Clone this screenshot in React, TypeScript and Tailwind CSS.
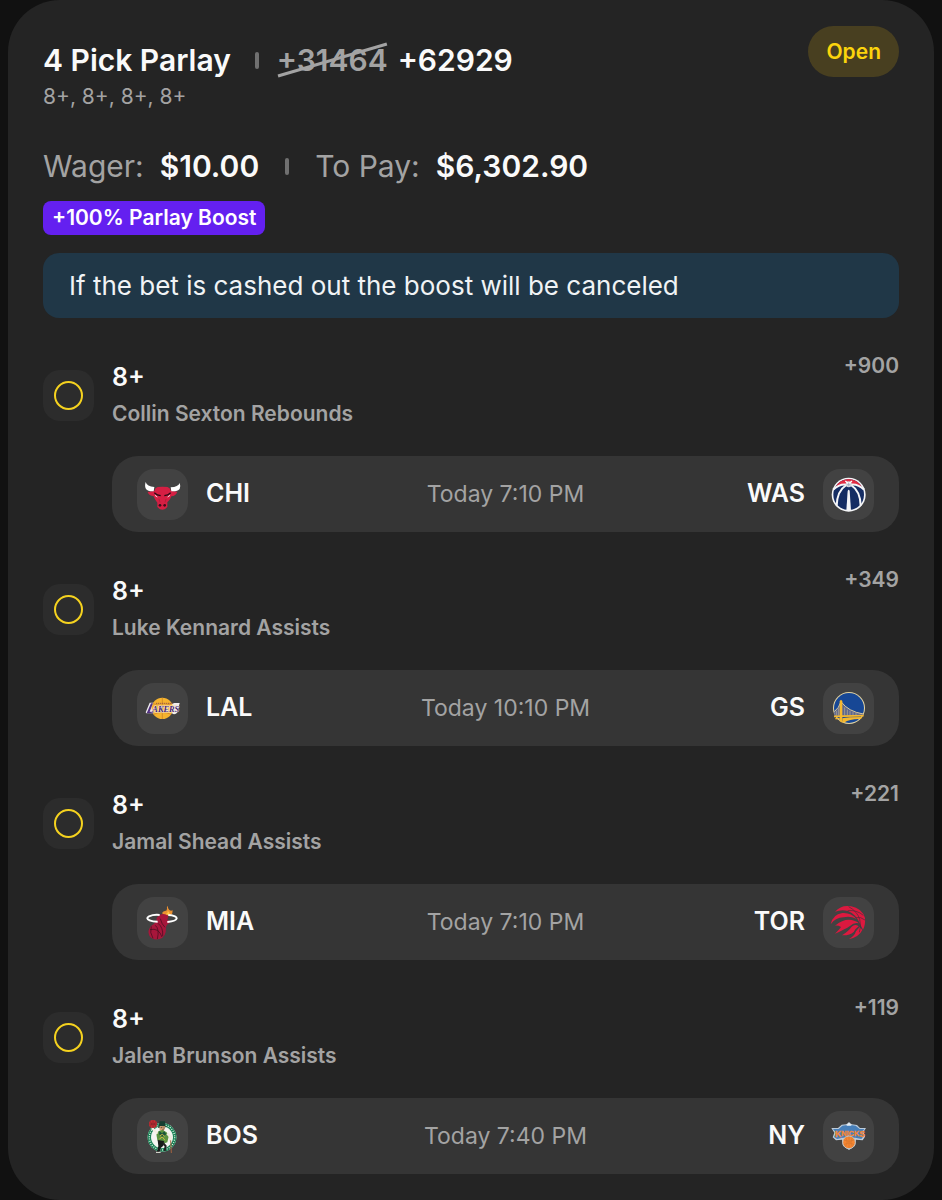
import React from 'react';

type TeamCode = 'CHI' | 'WAS' | 'LAL' | 'GS' | 'MIA' | 'TOR' | 'BOS' | 'NY';

interface Leg {
    pick: string;
    market: string;
    odds: string;
    away: TeamCode;
    home: TeamCode;
    time: string;
}

const legs: Leg[] = [
    { pick: '8+', market: 'Collin Sexton Rebounds', odds: '+900', away: 'CHI', home: 'WAS', time: 'Today 7:10 PM' },
    { pick: '8+', market: 'Luke Kennard Assists', odds: '+349', away: 'LAL', home: 'GS', time: 'Today 10:10 PM' },
    { pick: '8+', market: 'Jamal Shead Assists', odds: '+221', away: 'MIA', home: 'TOR', time: 'Today 7:10 PM' },
    { pick: '8+', market: 'Jalen Brunson Assists', odds: '+119', away: 'BOS', home: 'NY', time: 'Today 7:40 PM' },
];

/* Team marks, all drawn on a 153 unit tile */
const logos: Record<TeamCode, React.ReactNode> = {
    CHI: (
        <>
            <path d="M32 69 L52 66 Q54 56 62 54 Q76 52 92 54 Q100 57 102 66 L121 68 Q117 80 103 82 L99 91 L91 100 L91 114 Q85 122 76 122 Q67 122 61 114 L61 101 L54 91 L50 82 Q36 80 32 69Z" fill="#d51f43" />
            <path d="M26 39 Q30 53 52 54 L50 67 Q33 68 27 60 Q22 52 26 39Z" fill="#fff" />
            <path d="M128 42 Q124 54 101 55 L103 67 Q122 68 128 60 Q132 53 128 42Z" fill="#fff" />
            <path d="M52 71 L61 78 L71 80 M101 71 L92 78 L82 80" stroke="#250d14" strokeWidth="4" fill="none" />
            <path d="M54 79 L61 84 M99 79 L92 84" stroke="#f4dfe3" strokeWidth="3" />
            <path d="M66 90 L69 100 M87 90 L84 100" stroke="#a81a38" strokeWidth="2" />
            <circle cx="69" cy="109" r="4" fill="#3a0d18" />
            <circle cx="83" cy="109" r="4" fill="#3a0d18" />
        </>
    ),
    WAS: (
        <>
            <circle cx="77" cy="77" r="51" fill="#f5f6f8" />
            <circle cx="77" cy="77" r="46" fill="#152d63" />
            <path d="M36 56 Q50 31 77 30 Q104 31 118 56 Q98 44 77 46 Q56 44 36 56Z" fill="#e12c43" />
            <path d="M31 62 Q52 41 77 48 Q102 41 123 62" stroke="#f5f6f8" strokeWidth="6" fill="none" />
            <path d="M70 48 Q42 66 41 110 M84 48 Q112 66 113 110" stroke="#f5f6f8" strokeWidth="6" fill="none" />
            <path d="M74 66 Q77 59 80 66 L84 125 H70Z" fill="#f5f6f8" />
            <circle cx="77" cy="46" r="9" fill="#d8dbe2" />
            <path d="M67 36 L75 43 M87 36 L79 43" stroke="#fff" strokeWidth="4" />
            <path d="M72 47 H82 M77 42 V52" stroke="#9ba5b8" strokeWidth="2" />
        </>
    ),
    LAL: (
        <>
            <path d="M38 59 H52 L49 84 L112 60 H128 L122 84 Q119 94 111 94 L104 91 L28 91 L26 88Z" fill="#efecef" />
            <circle cx="76" cy="76" r="32" fill="#f5b32e" />
            <path d="M48 62 Q76 72 104 62 M50 94 Q76 82 102 94 M76 44 V108" stroke="#c57b25" strokeWidth="2" fill="none" />
            <path d="M53 65 H126 L118 89 L45 91Z" fill="#f4d492" fillOpacity=".35" />
            <path d="M42 61 H48 L38 86 H50 L48 91 H29Z" fill="#513081" />
            <text x="46" y="87" fontFamily="Liberation Serif, serif" fontSize="25" fontWeight="700" fontStyle="italic" fill="#49256f" stroke="#fff" strokeWidth="2" paintOrder="stroke">AKERS</text>
            <path d="M57 61 H107" stroke="#9a5841" strokeWidth="3" strokeDasharray="4 2" />
        </>
    ),
    GS: (
        <>
            <circle cx="78" cy="75" r="48" fill="#e2d4a4" />
            <circle cx="78" cy="75" r="45" fill="#174795" />
            <path d="M34 88 Q49 74 53 56 Q77 86 121 93 L119 98 L34 98Z" fill="#5b6590" />
            <path d="M34 86 Q48 75 54 56 Q76 86 121 93" stroke="#dccb9d" strokeWidth="3" fill="none" />
            <path d="M40 83 V98 M46 76 V98 M65 73 V98 M73 80 V98 M81 84 V98 M90 87 V98 M99 90 V98" stroke="#c2b690" strokeWidth="2" />
            <path d="M33 100 L122 98" stroke="#f5b82e" strokeWidth="5" />
            <path d="M50 54 L54 50 L58 54 V119 L50 115Z" fill="#f5b82e" />
            <path d="M58 106 Q74 102 118 102 L114 108 Q80 107 63 119 L58 118Z" fill="#f5b82e" />
            <path d="M37 107 H50" stroke="#f5b82e" strokeWidth="4" />
        </>
    ),
    MIA: (
        <>
            <path d="M77 52 Q73 44 84 42 Q90 42 90 35 Q88 30 93 26 Q91 35 97 39 Q104 44 106 38 Q109 50 99 57Z" fill="#eb9132" />
            <path d="M86 51 Q94 49 91 42 Q101 46 96 54Z" fill="#ffc744" />
            <path d="M69 53 Q82 48 94 57 L91 69 Q100 71 98 78 Q88 82 87 92 Q88 119 68 126 Q47 131 37 116 Q30 101 42 87 Q61 75 59 62Z" fill="#a7163b" />
            <path d="M55 85 Q68 96 61 126 M39 98 Q65 91 75 120 M43 88 Q37 107 48 124 M63 79 Q79 91 77 117 M70 65 Q74 82 84 91" stroke="#390d1c" strokeWidth="2" fill="none" />
            <path d="M68 54 Q50 52 36 58 Q25 64 38 70 Q47 74 62 74 M94 54 Q119 56 119 64 Q118 72 91 75" stroke="#fff" strokeWidth="6" fill="none" />
        </>
    ),
    TOR: (
        <g fill="#dc193f">
            <path d="M36 44 Q56 22 84 28 Q117 34 126 63 Q128 83 120 98 L113 85 Q101 52 75 42 Q56 36 36 44Z" />
            <path d="M23 82 Q29 52 58 48 Q84 46 101 66 Q80 55 62 61 Q36 62 23 82Z" />
            <path d="M36 86 Q63 64 86 69 Q103 73 107 79 Q93 76 82 86 Q66 97 36 110 Q50 97 54 90 Q46 85 36 86Z" />
            <path d="M57 115 Q78 101 86 89 Q96 80 107 88 Q98 94 92 105 Q80 116 57 115Z" />
            <path d="M110 90 L118 99 Q108 120 77 127 Q95 117 99 103Z" />
            <path d="M77 29 Q104 44 110 67 Q116 87 109 106 M74 41 Q101 38 121 55 M98 62 Q112 58 126 69" stroke="#443039" strokeWidth="2" fill="none" />
        </g>
    ),
    BOS: (
        <>
            <circle cx="75" cy="79" r="43" fill="#edf2ed" />
            <circle cx="75" cy="79" r="38" fill="none" stroke="#178154" strokeWidth="10" />
            <circle cx="75" cy="79" r="38" fill="none" stroke="#ecf4ed" strokeWidth="4" strokeDasharray="3 4" />
            <circle cx="75" cy="79" r="30" fill="#f5f5f2" />
            <path d="M65 46 L68 31 L84 31 L85 46 L91 48 L63 51Z" fill="#163e31" />
            <path d="M68 45 L85 46 L82 58 L74 62 L67 55Z" fill="#d6a175" />
            <path d="M71 50 H76 M79 51 H83 M75 57 H81" stroke="#242424" strokeWidth="2" />
            <path d="M65 60 L76 57 L88 63 L96 73 L91 94 L78 98 L61 88 L58 69Z" fill="#5b9440" />
            <path d="M67 60 L75 67 L82 61 L88 70 L76 78 L66 70Z" fill="#1b553c" />
            <path d="M61 68 L52 58 L45 51" stroke="#f4eee2" strokeWidth="7" fill="none" />
            <path d="M91 67 L101 78 L99 91" stroke="#efe9df" strokeWidth="8" fill="none" />
            <path d="M62 87 L81 90 L79 104 L71 111 L70 121 L59 126 L64 105Z" fill="#171c1a" />
            <path d="M78 96 L86 105 L83 120" stroke="#222" strokeWidth="6" fill="none" />
            <circle cx="48" cy="39" r="12" fill="#c82c32" />
            <path d="M37 39 H59 M48 28 V50 M40 31 Q48 39 40 47 M56 31 Q49 39 56 47" stroke="#76252b" strokeWidth="2" fill="none" />
            <path d="M101 88 L103 126" stroke="#a56340" strokeWidth="3" />
            <path d="M69 74 L76 70 L83 76 M67 84 L76 78 L84 88" stroke="#d1b946" strokeWidth="3" fill="none" />
            <path d="M57 124 H71" stroke="#f2f0e7" strokeWidth="3" />
        </>
    ),
    NY: (
        <>
            <path d="M25 51 H45 L56 41 L70 40 L78 34 L86 40 L102 42 L111 51 H129 L122 62 L126 77 L119 88 L99 86 L96 104 L78 117 L60 104 L57 86 L39 88 L29 79 L34 65Z" fill="#bccbda" />
            <path d="M30 54 H47 L58 44 L78 41 L98 44 L110 54 H124 L118 62 L122 76 L115 84 L97 80 L60 80 L42 84 L33 78 L39 65Z" fill="#477fb9" />
            {/* Letters stand tallest at both ends */}
            <text y="79" fontFamily="Liberation Sans, sans-serif" fontWeight="700" fill="#f58735" stroke="#f58735" strokeWidth="1">
                <tspan x="36" fontSize="26">K</tspan>
                <tspan fontSize="22" dy="-3">NICK</tspan>
                <tspan fontSize="26" dy="3">S</tspan>
            </text>
            <circle cx="78" cy="94" r="19" fill="#f58531" stroke="#bfc6c9" strokeWidth="3" />
            <path d="M62 87 Q78 95 94 87 M63 101 Q78 91 93 101 M78 77 V111 M68 80 Q77 94 67 107 M89 80 Q79 94 89 107" stroke="#d5762e" strokeWidth="2" fill="none" />
            <path d="M78 35 V44 M71 42 H85" stroke="#e9f0f5" strokeWidth="4" />
        </>
    ),
};

const TeamLogo = ({ team }: { team: TeamCode }) => (
    <span className="size-[51px] shrink-0 rounded-[17px] bg-[#424242]">
        <svg viewBox="0 0 153 153" className="size-full" aria-hidden="true">
            {logos[team]}
        </svg>
    </span>
);

const Divider = () => <span className="h-[17px] w-1 shrink-0 rounded-full bg-[#707070]" />;

const LegRow = ({ leg }: { leg: Leg }) => (
    <li className="flex gap-[18px]">
        <span className="mt-[18px] flex size-[51px] shrink-0 items-center justify-center rounded-[17px] bg-[#2c2c2c]">
            <span className="size-[29px] rounded-full border-2 border-[#f5d21f]" />
        </span>
        <div className="min-w-0 flex-1">
            <div className="flex justify-between">
                <div className="pt-2">
                    <h3 className="text-[25px] leading-[34px] font-semibold text-[#fafafa]">{leg.pick}</h3>
                    <p className="mt-1 text-[21px] leading-8 font-semibold text-[#a3a3a3]">{leg.market}</p>
                </div>
                <span className="text-[21px] leading-7 font-semibold text-[#a3a3a3]">{leg.odds}</span>
            </div>
            {/* Matchup */}
            <div className="mt-[26px] grid h-[76px] grid-cols-[1fr_auto_1fr] items-center rounded-[26px] bg-[#353535] px-[25px] text-[25px] font-semibold text-[#fafafa]">
                <div className="flex items-center gap-[18px]">
                    <TeamLogo team={leg.away} />
                    <span>{leg.away}</span>
                </div>
                <time className="text-[23px] font-normal text-[#a3a3a3]">{leg.time}</time>
                <div className="flex items-center justify-end gap-[18px]">
                    <span>{leg.home}</span>
                    <TeamLogo team={leg.home} />
                </div>
            </div>
        </div>
    </li>
);

export default function App() {
    return (
        <main className="min-h-screen bg-[#111111] px-2 font-['Inter',sans-serif]">
            <article className="rounded-[52px] bg-[#242424] px-[35px] pt-[26px] pb-[26px]">
                <header className="flex items-start justify-between">
                    <div className="pt-4">
                        <div className="flex items-center text-[30px] leading-9 font-semibold text-[#fafafa]">
                            <h2 className="mr-6">4 Pick Parlay</h2>
                            <Divider />
                            <span className="relative mr-[10px] ml-[18px] text-[#a3a3a3]">
                                +31464
                                <svg viewBox="0 0 110 36" preserveAspectRatio="none" className="absolute inset-0 size-full" aria-hidden="true">
                                    <path d="M1 34 L109 2" stroke="#a3a3a3" strokeWidth="3" />
                                </svg>
                            </span>
                            <span>+62929</span>
                        </div>
                        <p className="mt-[3px] text-[21px] leading-8 text-[#a3a3a3]">8+, 8+, 8+, 8+</p>
                    </div>
                    <span className="rounded-full bg-[#483f20] px-[18px] text-[21px] leading-[51px] font-semibold text-[#fcd40c]">Open</span>
                </header>

                <dl className="mt-8 flex items-center text-[30px] leading-[42px]">
                    <dt className="mr-4 font-normal text-[#a3a3a3]">Wager:</dt>
                    <dd className="mr-[26px] font-semibold text-[#fafafa]">$10.00</dd>
                    <Divider />
                    <dt className="mr-4 ml-[26px] font-normal text-[#a3a3a3]">To Pay:</dt>
                    <dd className="font-semibold text-[#fafafa]">$6,302.90</dd>
                </dl>

                <div className="mt-[14px] flex">
                    <span className="rounded-lg bg-[#6420f0] px-[9px] text-[21px] leading-[34px] font-semibold text-white">+100% Parlay Boost</span>
                </div>
                <p className="mt-[18px] rounded-2xl bg-[#203747] px-[26px] text-[26px] leading-[65px] text-[#f0f3f5]">
                    If the bet is cashed out the boost will be canceled
                </p>

                <ul className="mt-[34px] flex flex-col gap-[34px]">
                    {legs.map(leg => <LegRow key={leg.market} leg={leg} />)}
                </ul>
            </article>
        </main>
    );
}
